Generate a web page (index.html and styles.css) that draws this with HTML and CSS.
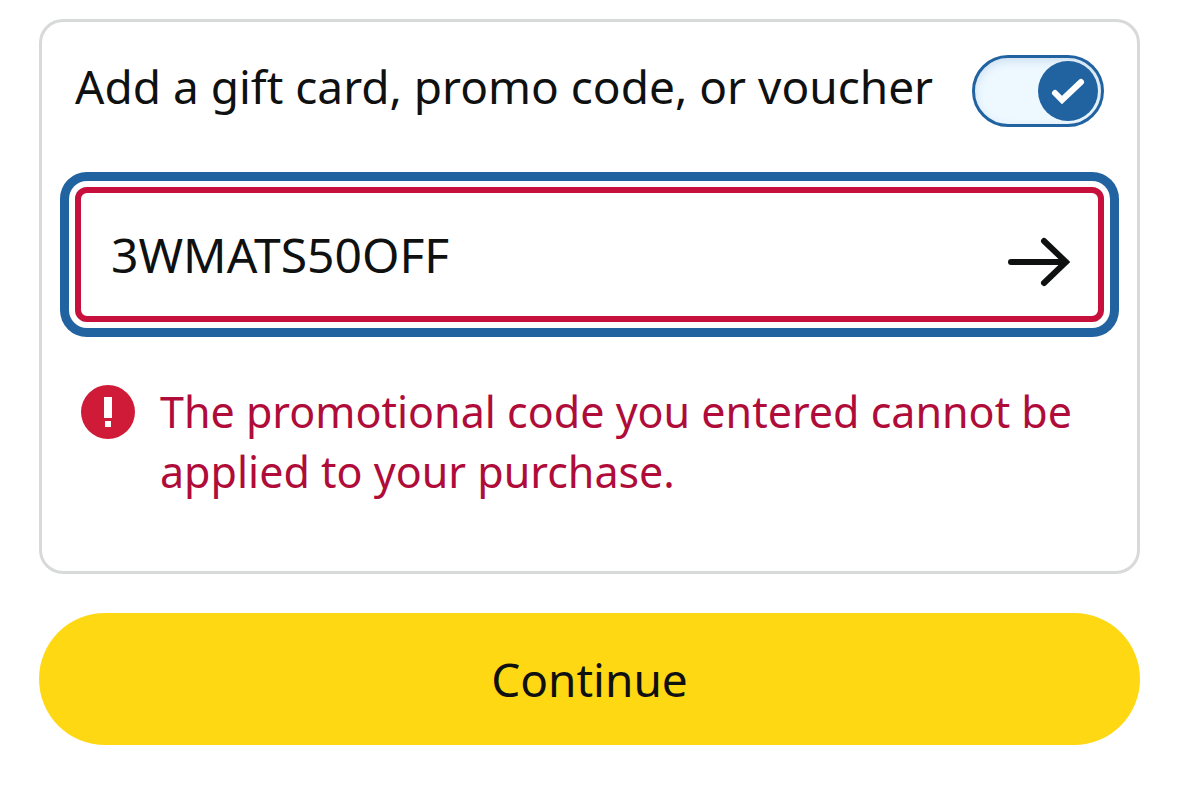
FILE: index.html
```
<!DOCTYPE html>
<html lang="en">
<head>
  <meta charset="UTF-8">
  <meta name="viewport" content="width=device-width, initial-scale=1.0">
  <title>Add a gift card, promo code, or voucher</title>
  <link rel="stylesheet" href="styles.css">
</head>
<body>
  <form class="page">
    <div class="card">
      <div class="card-header">
        <label class="card-title" for="use-code">Add a gift card, promo code, or voucher</label>
        <span class="toggle">
          <input class="toggle-input" type="checkbox" id="use-code" checked>
          <svg class="toggle-knob" viewBox="0 0 60 60" aria-hidden="true">
            <circle cx="30" cy="30" r="30"/>
            <path d="M17 32 L24 39 L43 21"/>
          </svg>
        </span>
      </div>

      <div class="field">
        <input class="field-input" type="text" id="code" name="code" value="3WMATS50OFF" aria-label="Enter code" aria-describedby="code-error" aria-invalid="true">
        <button class="field-submit" type="button" aria-label="Apply code">
          <svg class="arrow" viewBox="0 0 62 50" aria-hidden="true">
            <path d="M3 25 H58 M36 4 L58 25 L36 46"/>
          </svg>
        </button>
      </div>

      <div class="error" id="code-error" role="alert">
        <svg class="error-icon" viewBox="0 0 54 54" aria-hidden="true">
          <circle cx="27" cy="27" r="27"/>
          <path d="M23 12 H31 V33 H23 Z M24 36 H30 V42 H24 Z"/>
        </svg>
        <p class="error-text">The promotional code you entered cannot be applied to your purchase.</p>
      </div>
    </div>

    <button class="btn" type="button">Continue</button>
  </form>
</body>
</html>
```

FILE: styles.css
```
* { box-sizing: border-box; }
body { margin: 0; background-color: #fff; color: #0f1111; font-family: "Noto Sans", sans-serif; font-size: 46px; line-height: 60px; }
input, button { font: inherit; color: inherit; }
.page { padding: 19px 39px; }

.card { padding: 33px 33px 69px; border: 3px solid #d8d9d9; border-radius: 24px; }
.card-header { display: flex; align-items: center; justify-content: space-between; min-height: 72px; margin-bottom: 60px; }
.card-title { padding-bottom: 10px; }

.toggle { position: relative; flex: none; width: 132px; height: 72px; }
.toggle-input { appearance: none; display: block; width: 100%; height: 100%; margin: 0; border: 3px solid #2162a1; border-radius: 36px; background-color: #edf8ff; box-shadow: inset 0 3px 8px #cddff0; cursor: pointer; }
.toggle-knob { position: absolute; top: 6px; right: 6px; width: 60px; height: 60px; pointer-events: none; }
.toggle-knob circle { fill: #2162a1; }
.toggle-knob path { fill: none; stroke: #fff; stroke-width: 6; stroke-linecap: round; }

/* red border for the error, blue ring for the focus */
.field { display: flex; align-items: stretch; height: 135px; border: 6px solid #c7113c; border-radius: 12px; box-shadow: 0 0 0 6px #fff, 0 0 0 15px #2162a1; }
.field-input { flex: 1; min-width: 0; padding: 0 30px; border: none; outline: none; background: none; font-size: 48px; }
.field-submit { display: flex; align-items: center; padding: 14px 28px 0; border: none; background: none; cursor: pointer; }
.arrow { width: 62px; height: 50px; fill: none; stroke: #0f1111; stroke-width: 6; stroke-linecap: round; }

.error { display: flex; align-items: flex-start; gap: 25px; margin-top: 60px; padding-left: 6px; color: #b00c3a; }
.error-icon { flex: none; width: 54px; height: 54px; margin-top: 3px; fill: #cf1a38; }
.error-icon path { fill: #fff; }
.error-text { margin: 0; font-size: 43px; }

.btn { display: block; width: 100%; margin-top: 39px; padding: 36px; border: none; border-radius: 66px; background-color: #ffd814; cursor: pointer; }
.btn:hover { background-color: #f7ca00; }
```
